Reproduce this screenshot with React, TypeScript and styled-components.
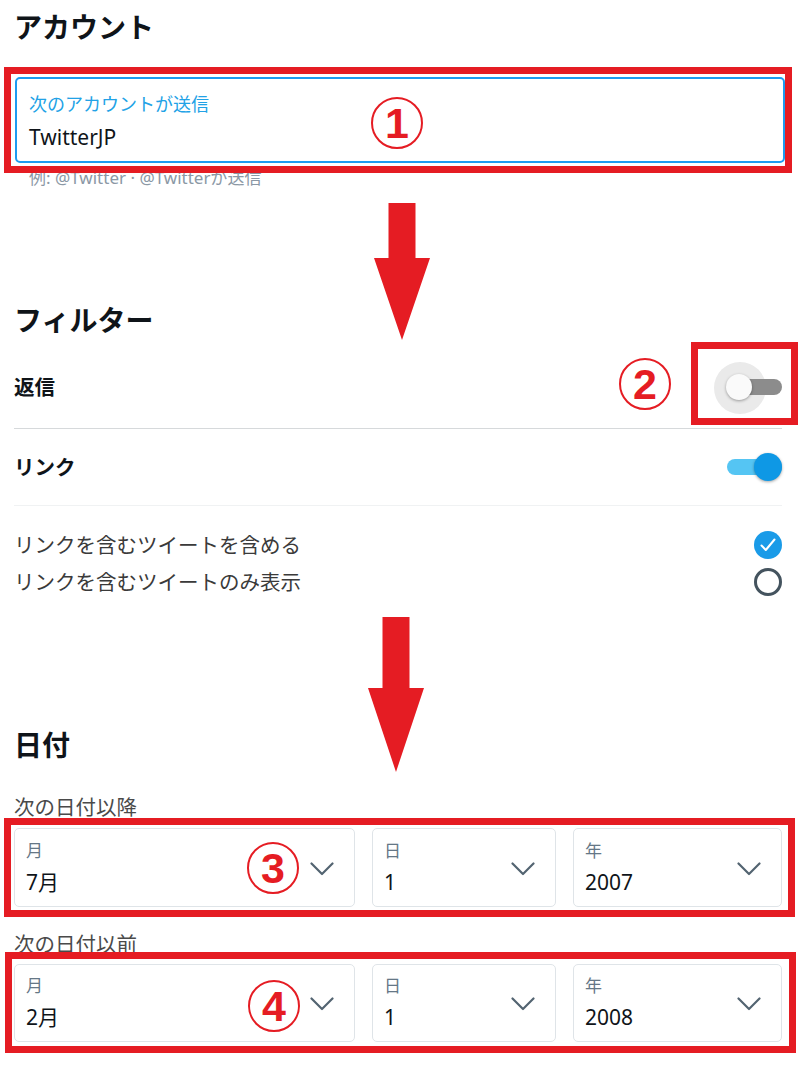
import * as React from 'react';
import styled, { createGlobalStyle } from 'styled-components';

const RED = '#e51c23';
const BLUE = '#1d9bf0';

const GlobalStyle = createGlobalStyle`
  html, body {
    margin: 0;
    padding: 0;
    background: #fff;
  }
  body {
    font-family: "Noto Sans", "Noto Sans CJK JP", sans-serif;
    color: #0f1419;
  }
  * { box-sizing: border-box; }
`;

const Page = styled.div`
  position: relative;
  width: 800px;
  height: 1068px;
  overflow: hidden;
  padding: 9px 18px 0 14px;
`;

const SectionTitle = styled.h2<{ $gap: number }>`
  margin: ${(p) => p.$gap}px 0 0;
  font-size: 28px;
  line-height: 36px;
  font-weight: 700;
  color: #0f1419;
`;

/* annotation layer: red frames, circled numbers, arrows */
const Annotated = styled.div<{ $gap: number }>`
  position: relative;
  margin-top: ${(p) => p.$gap}px;
`;

const RedFrame = styled.div<{ $t: number; $r: number; $b: number; $l: number }>`
  position: absolute;
  top: ${(p) => -p.$t}px;
  right: ${(p) => -p.$r}px;
  bottom: ${(p) => -p.$b}px;
  left: ${(p) => -p.$l}px;
  border: 7px solid ${RED};
  pointer-events: none;
  z-index: 5;
`;

const CircleNum = styled.div<{ $x: number; $y: number }>`
  position: absolute;
  left: ${(p) => p.$x}px;
  top: ${(p) => p.$y}px;
  width: 52px;
  height: 52px;
  border: 2.5px solid ${RED};
  border-radius: 50%;
  display: flex;
  align-items: center;
  justify-content: center;
  color: ${RED};
  font-family: "Liberation Sans", Arial, sans-serif;
  font-weight: 700;
  font-size: 43px;
  line-height: 1;
  z-index: 6;
`;

const ArrowSvg = styled.svg<{ $top: number; $left: number }>`
  position: absolute;
  top: ${(p) => p.$top}px;
  left: ${(p) => p.$left}px;
  z-index: 6;
`;

const DownArrow = ({ top, left, shaft, height }: { top: number; left: number; shaft: number; height: number }) => {
  const w = 56;
  const s = 27;
  const a = (w - s) / 2;
  const b = (w + s) / 2;
  const pts = `${a},0 ${b},0 ${b},${shaft} ${w},${shaft} ${w / 2},${height} 0,${shaft} ${a},${shaft}`;
  return (
    <ArrowSvg $top={top} $left={left} width={w} height={height} viewBox={`0 0 ${w} ${height}`}>
      <polygon points={pts} fill={RED} />
    </ArrowSvg>
  );
};

/* account input */
const InputBox = styled.div`
  height: 86px;
  margin: 0 -3px 0 1px;
  border: 2px solid ${BLUE};
  border-radius: 5px;
  padding: 14px 0 0 12px;
`;

const InputLabel = styled.div`
  font-size: 18px;
  line-height: 22px;
  color: #22a2e6;
`;

const InputValue = styled.div`
  margin-top: 8px;
  font-size: 21px;
  line-height: 28px;
  color: #0f1419;
`;

const Hint = styled.div`
  margin-top: 5px;
  padding-left: 15px;
  font-size: 17px;
  line-height: 20px;
  color: #8b98a5;
`;

/* filter rows */
const SettingRow = styled.div<{ $h: number; $line: string; $gap?: number }>`
  display: flex;
  align-items: center;
  justify-content: space-between;
  height: ${(p) => p.$h}px;
  margin-top: ${(p) => p.$gap || 0}px;
  border-bottom: 1px solid ${(p) => p.$line};
`;

const SettingLabel = styled.span`
  font-size: 20.5px;
  font-weight: 700;
  line-height: 28px;
`;

const Switch = styled.div<{ $on: boolean }>`
  position: relative;
  width: 55px;
  height: 28px;
`;

const Halo = styled.div`
  position: absolute;
  left: -13px;
  top: -11px;
  width: 52px;
  height: 52px;
  border-radius: 50%;
  background: #eaeaea;
  z-index: 0;
`;

const Track = styled.div<{ $on: boolean }>`
  position: absolute;
  left: 0;
  right: 0;
  top: 6px;
  height: 16px;
  border-radius: 8px;
  background: ${(p) => (p.$on ? '#55c5f3' : '#8c8c8c')};
  z-index: 1;
`;

const Thumb = styled.div<{ $on: boolean }>`
  position: absolute;
  top: ${(p) => (p.$on ? 0 : 1)}px;
  left: ${(p) => (p.$on ? 27 : -1)}px;
  width: ${(p) => (p.$on ? 28 : 26)}px;
  height: ${(p) => (p.$on ? 28 : 26)}px;
  border-radius: 50%;
  background: ${(p) => (p.$on ? '#0e98e5' : '#fafafa')};
  box-shadow: 0 1px 3px rgba(0, 0, 0, 0.35);
  z-index: 2;
`;

const Options = styled.div`
  margin-top: 20px;
`;

const OptionRow = styled.div`
  display: flex;
  align-items: center;
  justify-content: space-between;
  height: 37px;
`;

const OptionText = styled.span`
  font-size: 20.5px;
  line-height: 28px;
  color: #3a3a3a;
`;

const Radio = styled.div<{ $checked: boolean }>`
  width: 28px;
  height: 28px;
  border-radius: 50%;
  display: flex;
  align-items: center;
  justify-content: center;
  background: ${(p) => (p.$checked ? '#1a9be8' : 'transparent')};
  border: ${(p) => (p.$checked ? 'none' : '3px solid #44535e')};
`;

/* date selects */
const DateLabel = styled.div<{ $gap: number }>`
  margin-top: ${(p) => p.$gap}px;
  font-size: 20.5px;
  line-height: 24px;
  color: #4a4a4a;
`;

const SelectRow = styled.div<{ $h: number }>`
  display: grid;
  grid-template-columns: 341px 184px 1fr;
  column-gap: 17px;
  height: ${(p) => p.$h}px;
`;

const Select = styled.div`
  display: flex;
  align-items: center;
  justify-content: space-between;
  border: 1px solid #dfe4e8;
  border-radius: 5px;
  padding: 2px 20px 0 11px;
`;

const SelectText = styled.div`
  display: flex;
  flex-direction: column;
`;

const SelectLabel = styled.span`
  font-size: 17px;
  line-height: 18px;
  color: #657786;
`;

const SelectValue = styled.span`
  margin-top: 8px;
  font-size: 21px;
  line-height: 28px;
  color: #0f1419;
`;

const Chevron = () => (
  <svg width="24" height="14" viewBox="0 0 24 14">
    <path d="M1.5 1.5 L12 12 L22.5 1.5" fill="none" stroke="#536471" strokeWidth="2.2" strokeLinecap="round" strokeLinejoin="round" />
  </svg>
);

const DateSelect = ({ label, value }: { label: string; value: string }) => (
  <Select>
    <SelectText>
      <SelectLabel>{label}</SelectLabel>
      <SelectValue>{value}</SelectValue>
    </SelectText>
    <Chevron />
  </Select>
);

export default function App() {
  return (
    <>
      <GlobalStyle />
      <Page>
        <SectionTitle $gap={0}>アカウント</SectionTitle>
        <Annotated $gap={32}>
          <InputBox>
            <InputLabel>次のアカウントが送信</InputLabel>
            <InputValue>TwitterJP</InputValue>
          </InputBox>
          <RedFrame $t={10} $r={10} $b={10} $l={10} />
          <CircleNum $x={357} $y={20}>1</CircleNum>
        </Annotated>
        <Hint>例: @Twitter · @Twitterが送信</Hint>

        <SectionTitle $gap={114}>フィルター</SectionTitle>
        <SettingRow $h={83} $line="#d6d9db" $gap={8}>
          <SettingLabel>返信</SettingLabel>
          <Switch $on={false}>
            <Halo />
            <Track $on={false} />
            <Thumb $on={false} />
            <RedFrame $t={31} $r={16} $b={24} $l={36} />
            <CircleNum $x={-108} $y={-15}>2</CircleNum>
          </Switch>
        </SettingRow>
        <SettingRow $h={77} $line="#f0f2f3">
          <SettingLabel>リンク</SettingLabel>
          <Switch $on>
            <Track $on />
            <Thumb $on />
          </Switch>
        </SettingRow>
        <Options>
          <OptionRow>
            <OptionText>リンクを含むツイートを含める</OptionText>
            <Radio $checked>
              <svg width="16" height="14" viewBox="0 0 16 14">
                <path d="M1.5 7.5 L5.8 12 L14.5 1.5" fill="none" stroke="#fff" strokeWidth="2" strokeLinecap="round" strokeLinejoin="round" />
              </svg>
            </Radio>
          </OptionRow>
          <OptionRow>
            <OptionText>リンクを含むツイートのみ表示</OptionText>
            <Radio $checked={false} />
          </OptionRow>
        </Options>

        <SectionTitle $gap={127}>日付</SectionTitle>
        <DateLabel $gap={32}>次の日付以降</DateLabel>
        <Annotated $gap={9}>
          <SelectRow $h={79}>
            <DateSelect label="月" value="7月" />
            <DateSelect label="日" value="1" />
            <DateSelect label="年" value="2007" />
          </SelectRow>
          <RedFrame $t={10} $r={13} $b={10} $l={10} />
          <CircleNum $x={233} $y={14}>3</CircleNum>
        </Annotated>
        <DateLabel $gap={25}>次の日付以前</DateLabel>
        <Annotated $gap={8}>
          <SelectRow $h={78}>
            <DateSelect label="月" value="2月" />
            <DateSelect label="日" value="1" />
            <DateSelect label="年" value="2008" />
          </SelectRow>
          <RedFrame $t={12} $r={14} $b={11} $l={9} />
          <CircleNum $x={234} $y={16}>4</CircleNum>
        </Annotated>

        <DownArrow top={203} left={374} shaft={55} height={137} />
        <DownArrow top={617} left={368} shaft={71} height={155} />
      </Page>
    </>
  );
}
